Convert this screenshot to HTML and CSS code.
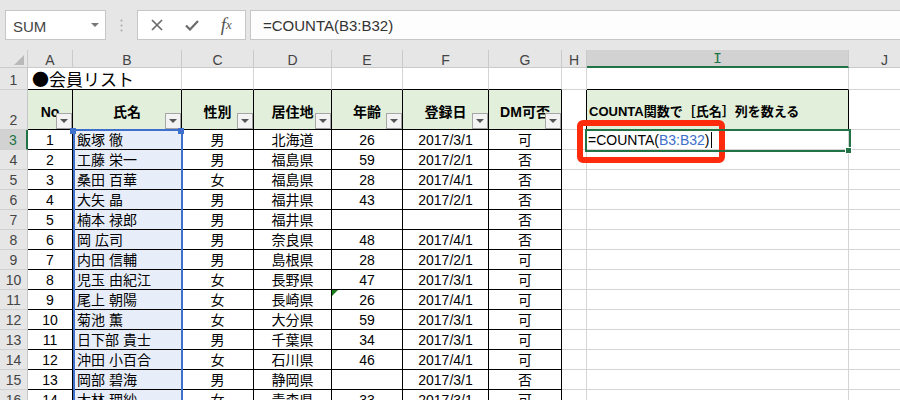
FILE: index.html
```html
<!DOCTYPE html>
<html lang="ja">
<head>
<meta charset="utf-8">
<title>会員リスト</title>
<link rel="stylesheet" href="styles.css">
</head>
<body>
<div class="toolbar">
  <div class="namebox"><span>SUM</span><span class="dd"></span></div>
  <div class="grip"><svg width="3" height="13" viewBox="0 0 3 13"><circle cx="1.5" cy="1.5" r="1" fill="#a8a8a8"/><circle cx="1.5" cy="6.5" r="1" fill="#a8a8a8"/><circle cx="1.5" cy="11.5" r="1" fill="#a8a8a8"/></svg></div>
  <div class="btns">
    <span class="bt"><svg width="12" height="12" viewBox="0 0 12 12"><path d="M1 1L11 11M11 1L1 11" stroke="#6b6b6b" stroke-width="1.7" fill="none"/></svg></span>
    <span class="bt"><svg width="14" height="11" viewBox="0 0 14 11"><path d="M1 5.5L5 9.5L13 1" stroke="#6b6b6b" stroke-width="2.2" fill="none"/></svg></span>
    <span class="bt fx">f<sub>x</sub></span>
  </div>
  <div class="formula">=COUNTA(B3:B32)</div>
</div>

<div class="sheet">
  <!-- column headers -->
  <div class="ch corner"></div>
  <div class="ch">A</div>
  <div class="ch">B</div>
  <div class="ch">C</div>
  <div class="ch">D</div>
  <div class="ch">E</div>
  <div class="ch">F</div>
  <div class="ch">G</div>
  <div class="ch">H</div>
  <div class="ch sel mono">I</div>
  <div class="ch">J</div>

  <!-- row 1 -->
  <div class="c rh">1</div>
  <div class="c tb title">●会員リスト</div>
  <div class="c tb"></div>
  <div class="c tb"></div>
  <div class="c tb"></div>
  <div class="c tb"></div>
  <div class="c tb"></div>
  <div class="c"></div>
  <div class="c tb"></div>
  <div class="c"></div>

  <!-- row 2 -->
  <div class="c rh">2</div>
  <div class="c t h">No<span class="fb"></span></div>
  <div class="c t h">氏名<span class="fb"></span></div>
  <div class="c t h">性別<span class="fb"></span></div>
  <div class="c t h">居住地<span class="fb"></span></div>
  <div class="c t h">年齢<span class="fb"></span></div>
  <div class="c t h">登録日<span class="fb"></span></div>
  <div class="c t h">DM可否<span class="fb"></span></div>
  <div class="c hl"></div>
  <div class="c t h lft">COUNTA関数で［氏名］列を数える</div>
  <div class="c"></div>

  <!-- row 3 -->
  <div class="c rh sel">3</div>
  <div class="c t">1</div>
  <div class="c t nm">飯塚 徹</div>
  <div class="c t">男</div>
  <div class="c t">北海道</div>
  <div class="c t">26</div>
  <div class="c t">2017/3/1</div>
  <div class="c t">可</div>
  <div class="c"></div>
  <div class="c lft fm">=COUNTA(<span class="ref">B3:B32</span>)<span class="caret"></span></div>
  <div class="c"></div>

  <!-- row 4 -->
  <div class="c rh">4</div>
  <div class="c t">2</div>
  <div class="c t nm">工藤 栄一</div>
  <div class="c t">男</div>
  <div class="c t">福島県</div>
  <div class="c t">59</div>
  <div class="c t">2017/2/1</div>
  <div class="c t">否</div>
  <div class="c"></div>
  <div class="c"></div>
  <div class="c"></div>

  <!-- row 5 -->
  <div class="c rh">5</div>
  <div class="c t">3</div>
  <div class="c t nm">桑田 百華</div>
  <div class="c t">女</div>
  <div class="c t">福島県</div>
  <div class="c t">28</div>
  <div class="c t">2017/4/1</div>
  <div class="c t">否</div>
  <div class="c"></div>
  <div class="c"></div>
  <div class="c"></div>

  <!-- row 6 -->
  <div class="c rh">6</div>
  <div class="c t">4</div>
  <div class="c t nm">大矢 晶</div>
  <div class="c t">男</div>
  <div class="c t">福井県</div>
  <div class="c t">43</div>
  <div class="c t">2017/2/1</div>
  <div class="c t">否</div>
  <div class="c"></div>
  <div class="c"></div>
  <div class="c"></div>

  <!-- row 7 -->
  <div class="c rh">7</div>
  <div class="c t">5</div>
  <div class="c t nm">楠本 禄郎</div>
  <div class="c t">男</div>
  <div class="c t">福井県</div>
  <div class="c t"></div>
  <div class="c t"></div>
  <div class="c t">否</div>
  <div class="c"></div>
  <div class="c"></div>
  <div class="c"></div>

  <!-- row 8 -->
  <div class="c rh">8</div>
  <div class="c t">6</div>
  <div class="c t nm">岡 広司</div>
  <div class="c t">男</div>
  <div class="c t">奈良県</div>
  <div class="c t">48</div>
  <div class="c t">2017/4/1</div>
  <div class="c t">否</div>
  <div class="c"></div>
  <div class="c"></div>
  <div class="c"></div>

  <!-- row 9 -->
  <div class="c rh">9</div>
  <div class="c t">7</div>
  <div class="c t nm">内田 信輔</div>
  <div class="c t">男</div>
  <div class="c t">島根県</div>
  <div class="c t">28</div>
  <div class="c t">2017/2/1</div>
  <div class="c t">可</div>
  <div class="c"></div>
  <div class="c"></div>
  <div class="c"></div>

  <!-- row 10 -->
  <div class="c rh">10</div>
  <div class="c t">8</div>
  <div class="c t nm">児玉 由紀江</div>
  <div class="c t">女</div>
  <div class="c t">長野県</div>
  <div class="c t">47</div>
  <div class="c t">2017/3/1</div>
  <div class="c t">可</div>
  <div class="c"></div>
  <div class="c"></div>
  <div class="c"></div>

  <!-- row 11 -->
  <div class="c rh">11</div>
  <div class="c t">9</div>
  <div class="c t nm">尾上 朝陽</div>
  <div class="c t">女</div>
  <div class="c t">長崎県</div>
  <div class="c t err">26</div>
  <div class="c t">2017/4/1</div>
  <div class="c t">可</div>
  <div class="c"></div>
  <div class="c"></div>
  <div class="c"></div>

  <!-- row 12 -->
  <div class="c rh">12</div>
  <div class="c t">10</div>
  <div class="c t nm">菊池 薫</div>
  <div class="c t">女</div>
  <div class="c t">大分県</div>
  <div class="c t">59</div>
  <div class="c t">2017/3/1</div>
  <div class="c t">可</div>
  <div class="c"></div>
  <div class="c"></div>
  <div class="c"></div>

  <!-- row 13 -->
  <div class="c rh">13</div>
  <div class="c t">11</div>
  <div class="c t nm">日下部 貴士</div>
  <div class="c t">男</div>
  <div class="c t">千葉県</div>
  <div class="c t">34</div>
  <div class="c t">2017/3/1</div>
  <div class="c t">可</div>
  <div class="c"></div>
  <div class="c"></div>
  <div class="c"></div>

  <!-- row 14 -->
  <div class="c rh">14</div>
  <div class="c t">12</div>
  <div class="c t nm">沖田 小百合</div>
  <div class="c t">女</div>
  <div class="c t">石川県</div>
  <div class="c t">46</div>
  <div class="c t">2017/4/1</div>
  <div class="c t">可</div>
  <div class="c"></div>
  <div class="c"></div>
  <div class="c"></div>

  <!-- row 15 -->
  <div class="c rh">15</div>
  <div class="c t">13</div>
  <div class="c t nm">岡部 碧海</div>
  <div class="c t">男</div>
  <div class="c t">静岡県</div>
  <div class="c t"></div>
  <div class="c t">2017/3/1</div>
  <div class="c t">否</div>
  <div class="c"></div>
  <div class="c"></div>
  <div class="c"></div>

  <!-- row 16 -->
  <div class="c rh">16</div>
  <div class="c t">14</div>
  <div class="c t nm">大林 理紗</div>
  <div class="c t">女</div>
  <div class="c t">青森県</div>
  <div class="c t">33</div>
  <div class="c t">2017/3/1</div>
  <div class="c t">可</div>
  <div class="c"></div>
  <div class="c"></div>
  <div class="c"></div>

  <!-- overlays -->
  <div class="refsel"></div>
  <div class="hnd hnd-l"></div>
  <div class="hnd hnd-r"></div>
  <div class="redbox"></div>
  <div class="active"></div>
  <div class="fill"></div>
</div>
</body>
</html>
```

FILE: styles.css
```css
* { box-sizing: border-box; margin: 0; padding: 0; }
html, body { width: 900px; height: 400px; overflow: hidden; background: #fff; }
body { font-family: "Liberation Sans", "Noto Sans CJK JP", sans-serif; color: #000; }

/* toolbar */
.toolbar { height: 50px; background: #e6e6e6; display: flex; align-items: flex-start; padding: 10px 0 0 5px; }
.namebox { width: 101px; height: 30px; background: #fff; border: 1px solid #c6c6c6; display: flex; align-items: center; justify-content: space-between; padding: 3px 6px 0 7px; color: #444; font-size: 15px; }
.dd { width: 0; height: 0; border-left: 4px solid transparent; border-right: 4px solid transparent; border-top: 4px solid #777; margin-top: -3px; }
.grip { width: 31px; height: 30px; display: flex; align-items: center; justify-content: center; }
.btns { width: 109px; height: 30px; background: #fff; border: 1px solid #c6c6c6; display: flex; align-items: center; padding-left: 1px; }
.bt { width: 36px; display: flex; justify-content: center; align-items: center; }
.fx { font-family: "Liberation Serif", serif; font-style: italic; font-size: 19px; color: #555; line-height: 18px; padding-right: 2px; }
.fx sub { font-size: 13px; vertical-align: -1px; }
.formula { flex: 1; margin-left: 4px; height: 30px; background: #fdfdfd; border: 1px solid #c6c6c6; border-right: none; padding: 1px 0 0 12px; font-size: 15px; display: flex; align-items: center; color: #333; }

/* sheet */
.sheet { position: relative; display: grid; grid-template-columns: 28px 45px 109px 72px 78px 71px 86px 73px 25px 262px 72px; grid-template-rows: 18px 22px 40px repeat(14, 20px); }

.ch { background: #e6e6e6; border-right: 1px solid #cacaca; border-bottom: 1px solid #cacaca; color: #444; font-size: 14px; display: flex; align-items: center; justify-content: center; padding-top: 2px; }
.ch.sel { background: #d2d2d2; color: #217346; border-bottom: 2px solid #217346; }
.mono { font-family: "Liberation Mono", monospace; font-size: 15px; }
.corner { position: relative; }
.corner::after { content: ""; position: absolute; right: 3px; bottom: 2px; border-left: 10px solid transparent; border-bottom: 10px solid #b9b9b9; }

.c { border-right: 1px solid #d4d4d4; border-bottom: 1px solid #d4d4d4; display: flex; align-items: flex-end; justify-content: center; font-size: 14px; line-height: 16px; white-space: nowrap; padding-bottom: 1px; }
.rh { background: #e6e6e6; border-right-color: #c6c6c6; border-bottom-color: #d0d0d0; color: #444; padding-bottom: 1px; }
.rh.sel { background: #d2d2d2; color: #217346; border-right: 2px solid #217346; }
.t { border-right-color: #000; border-bottom-color: #000; }
.tb { border-bottom-color: #000; }
.hl { border-right-color: #000; }
.title { grid-column: span 2; justify-content: flex-start; padding-left: 4px; font-family: "Noto Sans CJK JP", sans-serif; font-size: 17px; line-height: 20px; padding-bottom: 0; }
.h { background: #e2efda; font-weight: bold; position: relative; padding-bottom: 9px; font-size: 14px; }
.lft { justify-content: flex-start; padding-left: 2px; }
.h.lft { font-size: 13px; }
.nm { justify-content: flex-start; padding-left: 4px; background: #e8eef9; }
.fm { padding-left: 1px; }
.ref { color: #3d6fcb; }
.caret { display: inline-block; width: 1px; height: 16px; background: #000; margin-left: 1px; }
.err { position: relative; }
.err::before { content: ""; position: absolute; left: 0; top: 0; border-top: 6px solid #1c7d1c; border-right: 6px solid transparent; }

.fb { position: absolute; right: 0; bottom: 0; width: 16px; height: 16px; background: #f3f3f3; border: 1px solid #a6a6a6; }
.fb::after { content: ""; position: absolute; left: 3px; top: 5px; border-left: 4px solid transparent; border-right: 4px solid transparent; border-top: 4px solid #555; }

/* overlays */
.refsel { position: absolute; left: 73px; top: 79px; width: 110px; height: 330px; border: 2px solid #3d6fcb; }
.hnd { position: absolute; top: 78px; width: 6px; height: 6px; background: #3d6fcb; }
.hnd-l { left: 70px; }
.hnd-r { left: 178px; }
.redbox { position: absolute; left: 577px; top: 70px; width: 148px; height: 43px; border: 6px solid #fe2b0c; border-radius: 6px; }
.active { position: absolute; left: 585px; top: 79px; width: 266px; height: 23px; border: 2px solid #217346; }
.fill { position: absolute; left: 845px; top: 97px; width: 7px; height: 7px; background: #217346; border: 1px solid #fff; }
```
